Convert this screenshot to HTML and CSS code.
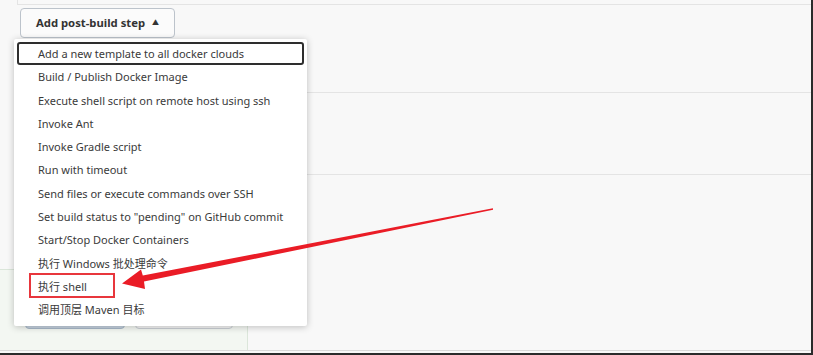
FILE: index.html
```html
<!DOCTYPE html>
<html>

<head>
    <title>Post-build Actions</title>
    <meta name="viewport" content="width=device-width, initial-scale=1.0">
    <link rel="stylesheet" href="styles.css">
</head>

<body>
    <div class="page">
        <div class="section section-top"></div>

        <div class="section section-build">
            <div class="dropdown">
                <button class="add-btn">Add post-build step <span class="caret">&#9650;</span></button>

                <ul class="menu">
                    <li class="menu-item focused">Add a new template to all docker clouds</li>
                    <li class="menu-item">Build / Publish Docker Image</li>
                    <li class="menu-item">Execute shell script on remote host using ssh</li>
                    <li class="menu-item">Invoke Ant</li>
                    <li class="menu-item">Invoke Gradle script</li>
                    <li class="menu-item">Run with timeout</li>
                    <li class="menu-item">Send files or execute commands over SSH</li>
                    <li class="menu-item">Set build status to "pending" on GitHub commit</li>
                    <li class="menu-item">Start/Stop Docker Containers</li>
                    <li class="menu-item">执行 Windows 批处理命令</li>
                    <li class="menu-item">执行 shell</li>
                    <li class="menu-item">调用顶层 Maven 目标</li>
                </ul>
            </div>
        </div>

        <div class="section section-mid"></div>

        <div class="section-bottom">
            <div class="save-panel">
                <button class="btn btn-primary">Save</button>
                <button class="btn btn-default">Apply</button>
            </div>
        </div>

        <!-- annotation drawn over the screenshot -->
        <svg class="annotation" width="813" height="355" viewBox="0 0 813 355">
            <rect x="30" y="274" width="84" height="23" fill="none" stroke="#e8363c" stroke-width="2" />
            <polygon fill="#ea1c26"
                points="122,283.5 145,289 144,281.5 493.1,209.7 492.9,208.3 142.8,275.5 141,269.5" />
        </svg>
    </div>
</body>

</html>
```

FILE: styles.css
```css
html,
body {
    margin: 0;
    height: 100%;
    font-family: "Noto Sans", "Noto Sans CJK SC", sans-serif;
    background: #f8f8f8;
}

.page {
    position: relative;
    width: 811px;
    height: 353px;
    border-right: 2px solid #2b2b2b;
    border-bottom: 2px solid #2b2b2b;
    background: #f8f8f8;
    display: flex;
    flex-direction: column;
}

.section {
    margin-left: 17px;
    border-bottom: 1px solid #e4e4e4;
}

.section-top {
    height: 4px;
    border-left: 1px solid #e4e4e4;
}

.section-build {
    height: 87px;
}

.section-mid {
    height: 81px;
}

.section-bottom {
    flex: 1;
    border-bottom: 1px solid #d9d9d9;
    margin-bottom: 2px;
    display: flex;
    flex-direction: column;
    justify-content: flex-end;
}

.save-panel {
    width: 248px;
    height: 81px;
    background: #f3f7f2;
    border-top: 1px solid #dbe6da;
    border-right: 1px solid #dbe6da;
    display: flex;
    gap: 10px;
    padding: 43px 0 0 25px;
    box-sizing: border-box;
}

.btn {
    height: 16px;
    border-radius: 4px;
    border: 1px solid #c9ced3;
    font-size: 1px;
    color: transparent;
}

.btn-primary {
    width: 100px;
    background: #c5d2df;
    border-color: #a8b8c8;
}

.btn-default {
    width: 98px;
    background: #f4f4f4;
}

.dropdown {
    position: relative;
    padding: 3px 0 0 3px;
}

.add-btn {
    width: 155px;
    height: 30px;
    border: 1px solid #bcc3cb;
    border-radius: 4px;
    background: #fbfbfb;
    font-family: inherit;
    font-size: 11.3px;
    font-weight: bold;
    color: #333;
    padding: 0 0 1px 0;
}

.caret {
    font-size: 7px;
    margin-left: 4px;
    position: relative;
    top: -2px;
}

.menu {
    position: absolute;
    left: -3px;
    top: 34px;
    width: 293px;
    margin: 0;
    padding: 3px 0 4px 0;
    list-style: none;
    background: #fff;
    border-radius: 2px;
    box-shadow: 0 1px 7px rgba(0, 0, 0, 0.24);
    z-index: 10;
}

.menu-item {
    height: 23.3px;
    line-height: 24px;
    margin: 0 3px;
    padding-left: 21px;
    font-size: 11px;
    color: #3a3a3a;
    white-space: nowrap;
    box-sizing: border-box;
}

.menu-item.focused {
    border: 2px solid #2e2e2e;
    border-radius: 3px;
    line-height: 20px;
    padding-left: 19px;
}

.annotation {
    position: absolute;
    left: 0;
    top: 0;
    z-index: 20;
    pointer-events: none;
}
```
